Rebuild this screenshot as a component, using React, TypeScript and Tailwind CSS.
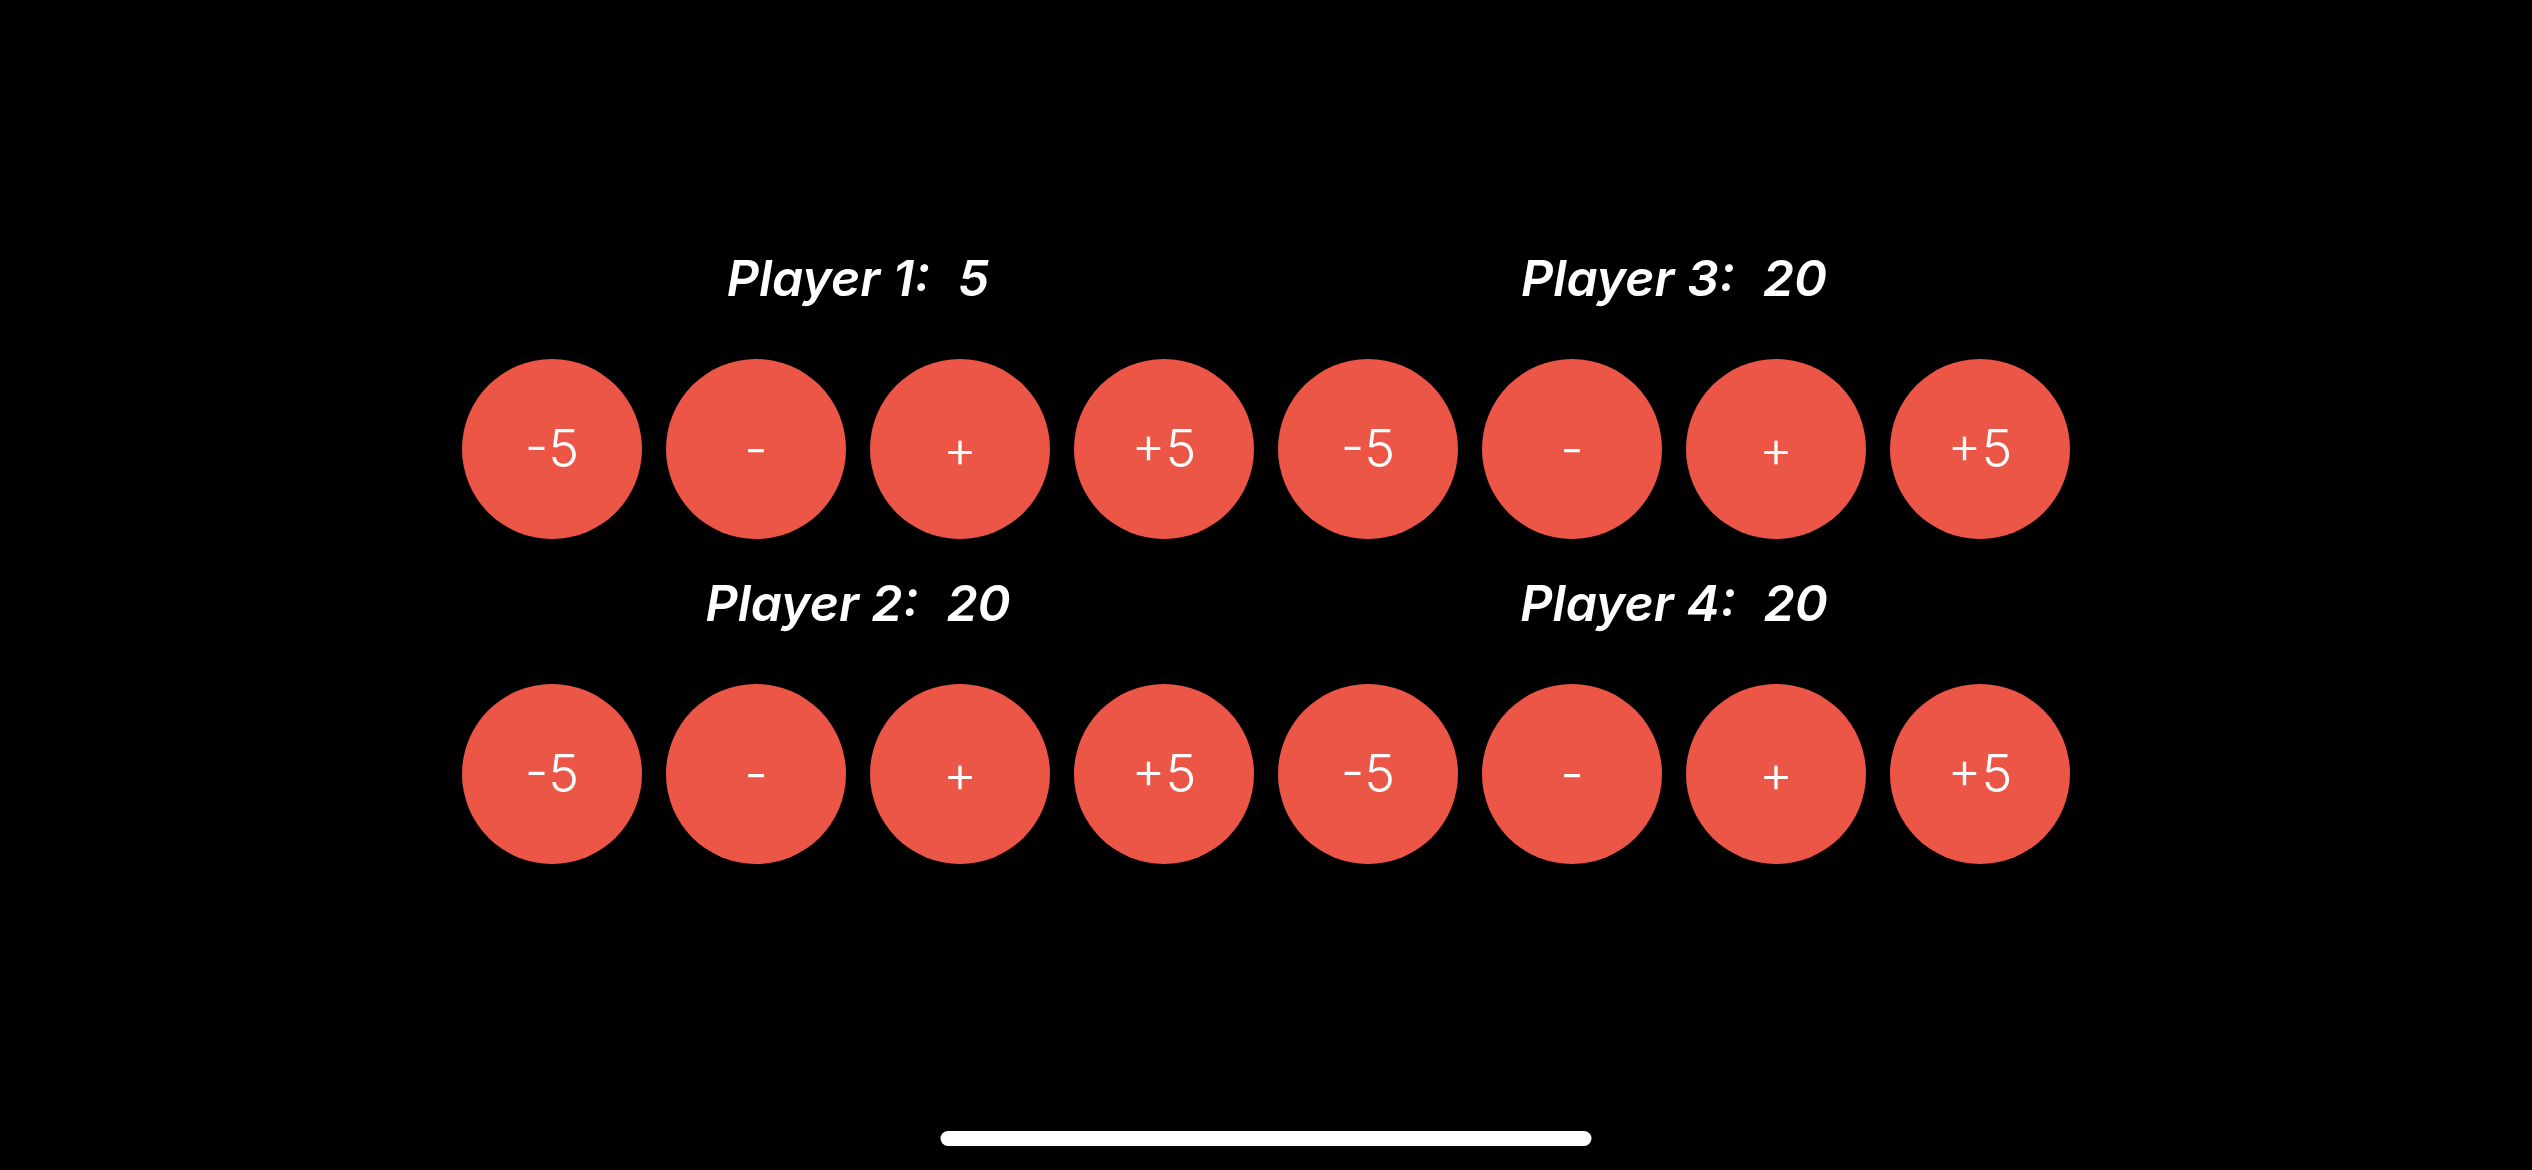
const players = [
  { name: "Player 1", score: 5 },
  { name: "Player 3", score: 20 },
  { name: "Player 2", score: 20 },
  { name: "Player 4", score: 20 },
];

const steps = ["-5", "-", "+", "+5"];

function PlayerCounter({ name, score }: { name: string; score: number }) {
  return (
    <div className="flex flex-col items-center">
      <div className="flex h-[61px] items-center gap-[28px] text-[50px] font-semibold italic leading-[61px] text-white">
        <span>{name}:</span>
        <span>{score}</span>
      </div>
      <div className="mt-[50px] flex gap-[24px]">
        {steps.map((s) => (
          <button
            key={s}
            type="button"
            className="flex h-[180px] w-[180px] items-center justify-center rounded-full bg-[#eb5646] text-[52px] font-[350] text-white"
          >
            {s}
          </button>
        ))}
      </div>
    </div>
  );
}

export default function App() {
  return (
    <div
      className="relative flex h-[1170px] w-[2532px] flex-col items-center overflow-hidden bg-black pt-[248px]"
      style={{ fontFamily: "Inter, 'Noto Sans', sans-serif" }}
    >
      <div className="grid grid-cols-2 gap-x-[24px] gap-y-[34px]">
        {players.map((p) => (
          <PlayerCounter key={p.name} name={p.name} score={p.score} />
        ))}
      </div>
      <div className="absolute bottom-[24px] left-1/2 h-[15px] w-[651px] -translate-x-1/2 rounded-full bg-white" />
    </div>
  );
}
